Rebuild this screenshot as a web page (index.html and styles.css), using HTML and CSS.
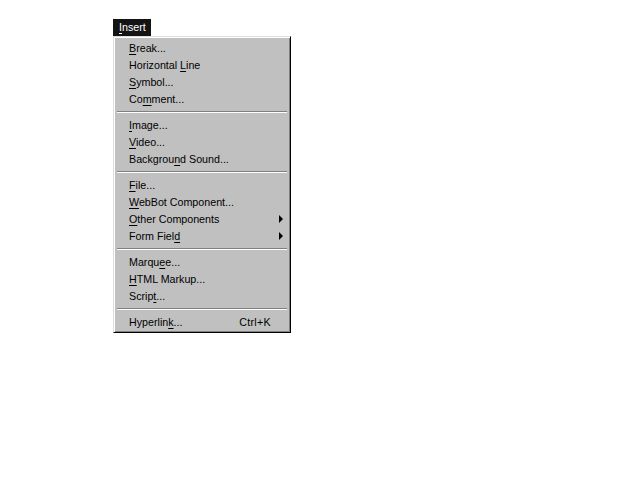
FILE: index.html
```html
<!DOCTYPE html>
<html lang="en">
    <head>
        <meta charset="UTF-8">
        <title>Insert menu</title>
        <link rel="stylesheet" href="styles.css">
    </head>
    <body>
        <div class="menubar">
            <div class="menu-title"><u>I</u>nsert</div>
        </div>
        <div class="menu">
            <div class="item"><span><u>B</u>reak...</span></div>
            <div class="item"><span>Horizontal <u>L</u>ine</span></div>
            <div class="item"><span><u>S</u>ymbol...</span></div>
            <div class="item"><span>Co<u>m</u>ment...</span></div>
            <div class="sep"></div>
            <div class="item"><span><u>I</u>mage...</span></div>
            <div class="item"><span><u>V</u>ideo...</span></div>
            <div class="item"><span>Backgrou<u>n</u>d Sound...</span></div>
            <div class="sep"></div>
            <div class="item"><span><u>F</u>ile...</span></div>
            <div class="item"><span><u>W</u>ebBot Component...</span></div>
            <div class="item"><span><u>O</u>ther Components</span><span class="arrow"></span></div>
            <div class="item"><span>Form Fiel<u>d</u></span><span class="arrow"></span></div>
            <div class="sep"></div>
            <div class="item"><span>Marqu<u>e</u>e...</span></div>
            <div class="item"><span><u>H</u>TML Markup...</span></div>
            <div class="item"><span>Scrip<u>t</u>...</span></div>
            <div class="sep"></div>
            <div class="item"><span>Hyperlin<u>k</u>...</span><span class="shortcut">Ctrl+K</span></div>
        </div>
    </body>
</html>
```

FILE: styles.css
```css
body {
    margin: 0;
    padding: 19px 0 0 113px;
    background-color: white;
    font-family: "Liberation Sans", Arial, sans-serif;
    font-size: 10.7px;
    color: black;
}

u {
    text-decoration: underline;
    text-underline-offset: 2px;
}

.menubar {
    display: flex;
}

.menu-title {
    background-color: #141414;
    color: white;
    height: 17px;
    line-height: 17px;
    padding: 0 5px 0 6px;
}

.menu {
    width: 178px;
    box-sizing: border-box;
    background-color: #c0c0c0;
    border-top: 1px solid #dfdfdf;
    border-left: 1px solid #dfdfdf;
    border-right: 1px solid #000;
    border-bottom: 1px solid #000;
    box-shadow: inset 1px 1px 0 #fff, inset -1px -1px 0 #808080;
    padding: 2px 2px;
    display: flex;
    flex-direction: column;
}

.item {
    height: 17px;
    display: flex;
    align-items: center;
    padding: 0 5px 0 13px;
}

.item span:first-child {
    flex: 1;
}

.shortcut {
    margin-right: 12px;
    letter-spacing: 0.3px;
}

.arrow {
    width: 0;
    height: 0;
    border-top: 4px solid transparent;
    border-bottom: 4px solid transparent;
    border-left: 4px solid black;
}

.sep {
    height: 9px;
    display: flex;
    flex-direction: column;
    justify-content: center;
    padding: 0 1px;
}

.sep::before {
    content: "";
    display: block;
    border-top: 1px solid #808080;
    border-bottom: 1px solid #fff;
}
```
